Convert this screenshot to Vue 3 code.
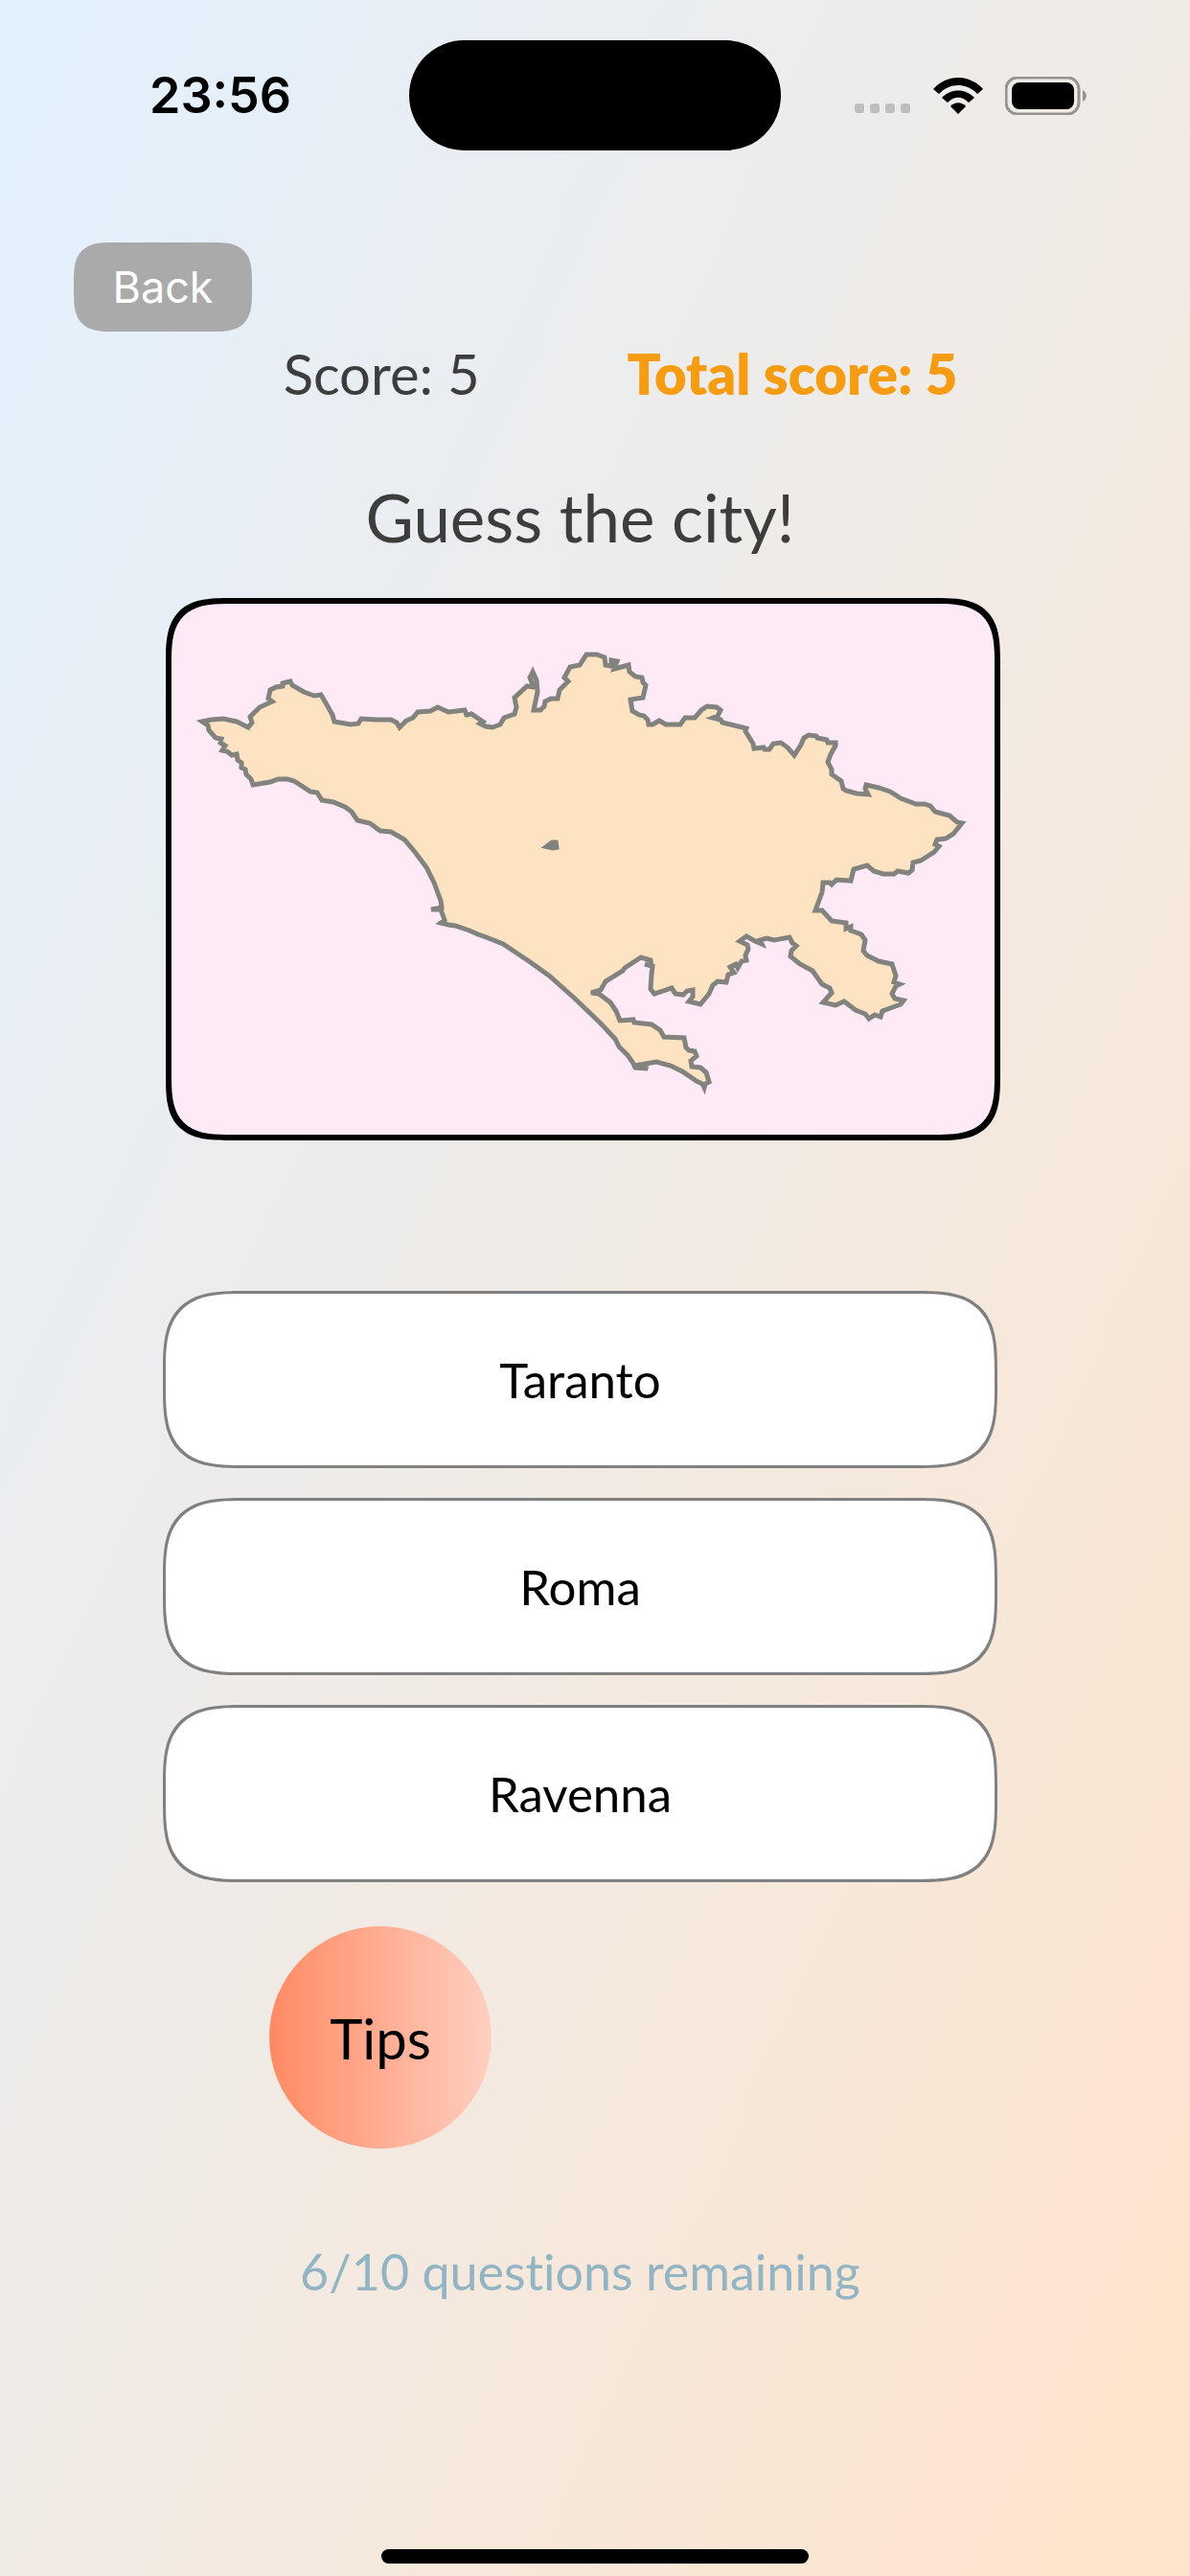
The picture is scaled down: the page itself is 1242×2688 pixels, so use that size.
<template>
  <div class="screen">
    <header class="status-bar">
      <time class="status-time">23:56</time>
      <div class="island"></div>
      <div class="status-icons">
        <svg class="signal" viewBox="0 0 60 40" aria-hidden="true">
          <rect v-for="n in 4" :key="n" :x="(n - 1) * 16 + 1" y="28" width="10" height="10" rx="3" />
        </svg>
        <svg class="wifi" viewBox="0 0 54 40" aria-hidden="true">
          <path d="M1 13C15-3 39-3 53 13L47 18C36 6 18 6 7 18Z" />
          <path d="M10 22C19 12 35 12 44 22L38 27C31 20 23 20 16 27Z" />
          <path d="M19 31C23 26 31 26 35 31L27 39Z" />
        </svg>
        <svg class="battery" viewBox="0 0 86 40" aria-hidden="true">
          <rect class="battery-shell" x="1" y="1" width="76" height="38" rx="12" />
          <rect x="7" y="6" width="65" height="28" rx="8" />
          <path class="battery-cap" d="M81 14C86 16 86 24 81 26Z" />
        </svg>
      </div>
    </header>

    <nav class="nav">
      <button class="back" type="button">Back</button>
    </nav>

    <main class="game">
      <div class="scores">
        <span class="score">Score: {{ score }}</span>
        <span class="total">Total score: {{ totalScore }}</span>
      </div>

      <h1 class="title">Guess the city!</h1>

      <div class="map">
        <svg viewBox="179 630 859 554" role="img" aria-label="City outline">
          <path class="region" :d="outline" />
          <path class="enclave" d="M568 884L576 878L581 878L582 885L577 886Z" />
        </svg>
      </div>

      <div class="answers">
        <button v-for="city in cities" :key="city" class="answer" type="button">{{ city }}</button>
      </div>

      <button class="tips" type="button">Tips</button>

      <p class="remaining">{{ remaining }}/10 questions remaining</p>
    </main>

    <div class="home-indicator"></div>
  </div>
</template>

<script setup>
import { ref } from 'vue'

const score = ref(5)
const totalScore = ref(5)
const remaining = ref(6)
const cities = ['Taranto', 'Roma', 'Ravenna']

const north =
  'M211 753L220 751L233 750L247 753L259 759L263 754L261 748L271 738L284 732L280 729L282 720L288 717L295 716L295 713L303 711L305 715L317 722L328 726L335 725L342 737L347 746L349 753L366 756L374 755L377 750L393 751L408 751L414 754L417 759L424 752L431 749L436 743L449 742L457 738L468 743L485 741L487 746L492 745L504 753L501 755L507 758L514 759L522 756L526 749L537 745L539 738L537 728L550 716L557 717L553 707L556 701L560 710L561 722L557 741L564 741L568 737L569 732L575 729L582 729L584 720L593 711L589 707L595 696L605 694L612 683L623 683L631 686L632 694L638 695L638 689L644 690L641 698L656 694L657 701L663 706L670 707L671 712L674 715L671 728L658 730L660 742L667 746L672 747L676 751L677 756L681 756L688 752L695 756L710 756L715 749L725 749L732 741L738 737L748 738L752 741L749 747L744 749L752 751L754 754L779 760L778 763L786 776L787 781L797 780L798 782L803 782L807 776L815 775L822 780L829 788L836 777L839 770L844 767L852 768L853 770L863 772L864 775L872 775L872 778L867 787L864 795L868 803L868 808L878 815L880 823L883 825L894 828L906 829L903 823L904 819L917 822L929 826L940 833L956 839L965 839L971 841L976 847L991 851L999 858L1004 859'
const east =
  'L995 870L987 875L978 876L976 881L980 883L975 889L961 898L953 900L952 908L948 911L937 909L933 912L922 912L912 909L905 903L891 907L888 919L873 918L868 923L866 921L859 921L858 931L851 950L858 950L868 961L883 963L883 969L888 967L888 971L899 975L903 981L901 992L905 997L917 1003L931 1006L935 1018L933 1025L939 1027L935 1029L931 1037L934 1042L943 1044L940 1048L921 1055L919 1061L913 1059L907 1063L903 1058L893 1054L881 1045L872 1049L859 1046L868 1036L866 1031L858 1027L848 1013L835 1006L825 998L826 992L831 987L827 984L824 978L808 981L800 979L793 981L795 985L788 982L779 977L772 982L780 986L781 990L778 997L779 1002L774 1003L770 1010L768 1006L762 1009L766 1015L760 1017L758 1025L749 1024L744 1028L740 1037L731 1048L719 1045L723 1040L723 1033L717 1034L713 1038L705 1037L701 1031L683 1037L679 1032L680 1017L681 1008L673 1006L680 1008L679 1002L669 999L652 1010L650 1013L632 1024L627 1033L617 1036'
const south =
  'L625 1037L637 1046L643 1055L647 1065L661 1064L662 1067L680 1069L689 1075L693 1082L714 1083L716 1093L719 1096L725 1097L727 1102L721 1107L722 1113L731 1114L737 1119L740 1129L736 1131L735 1135L733 1131L727 1128L712 1118L700 1112L685 1108L668 1111L676 1115L663 1114L660 1108L655 1101L646 1092L642 1084L627 1068L600 1042L573 1018L552 1003L543 997L525 985L510 979L499 975L490 971L475 966L468 965L460 963L464 960L460 949L450 949L461 947L460 940L453 921L445 905L433 889L422 876L408 868L397 867L386 859L373 856L367 847L360 842L348 837L336 835L331 827L324 826L307 815L300 813L290 813L282 816L264 819L262 813L257 808L256 803L252 801L252 796L248 793L247 787L242 788L237 784L232 783L235 778L230 775L231 771L225 770L218 762L217 757Z'
const outline = north + east + south
</script>

<style>
body {
  margin: 0;
}
</style>

<style scoped>
.screen {
  box-sizing: border-box;
  min-height: 100vh;
  display: flex;
  flex-direction: column;
  background: linear-gradient(to bottom right, #e2f1ff, #ffe4cb);
  font-family: Lato, 'Noto Sans', sans-serif;
  font-variant-ligatures: none;
  color: #000000;
}

button {
  font: inherit;
  color: inherit;
  border: 0;
  padding: 0;
}

.status-bar {
  display: grid;
  grid-template-columns: 1fr 388px 1fr;
  align-items: center;
  padding-top: 42px;
}

.status-time {
  padding-left: 156px;
  font: 600 52px/60px Inter, sans-serif;
}

.island {
  height: 115px;
  border-radius: 58px;
  background: #000000;
}

.status-icons {
  display: flex;
  justify-content: flex-end;
  gap: 22px;
  padding-right: 107px;
}

.status-icons svg {
  height: 40px;
}

.signal {
  width: 60px;
  fill: #bfbebc;
}

.wifi {
  width: 54px;
}

.battery {
  width: 86px;
}

.battery-shell {
  fill: none;
  stroke: #96928f;
  stroke-width: 3;
}

.battery-cap {
  fill: #96928f;
}

.nav {
  padding: 96px 77px 0;
}

.back {
  display: block;
  width: 186px;
  height: 93px;
  border-radius: 32px;
  background: #aaaaaa;
  color: #ffffff;
  font: 400 45px/54px Inter, sans-serif;
}

.game {
  display: flex;
  flex-direction: column;
  padding: 0 201px 0 170px;
}

.scores {
  display: flex;
  justify-content: center;
  gap: 154px;
  padding-left: 84px;
  margin-top: 8px;
  font-size: 58px;
  line-height: 72px;
}

.score {
  color: #3d3d3d;
}

.total {
  color: #f59c13;
  font-weight: 800;
}

.title {
  margin: 70px 0 40px;
  color: #3d3d3d;
  font-size: 69px;
  font-weight: 400;
  line-height: 88px;
  text-align: center;
}

.map {
  border: 6px solid #000000;
  border-radius: 48px;
  margin-right: -3px;
  margin-left: 3px;
  background: #feeaf6;
  overflow: hidden;
}

.map svg {
  display: block;
  width: 100%;
}

.region {
  fill: #fee3c3;
  stroke: #82827f;
  stroke-width: 5;
}

.enclave {
  fill: #82827f;
  stroke: #82827f;
  stroke-width: 3;
}

.answers {
  display: flex;
  flex-direction: column;
  gap: 31px;
  margin-top: 157px;
}

.answer {
  height: 185px;
  border: 3px solid #808080;
  border-radius: 64px;
  background: #ffffff;
  font-size: 51px;
}

.tips {
  width: 232px;
  height: 232px;
  margin: 46px 0 0 111px;
  border-radius: 50%;
  background: linear-gradient(to right, #ff8a64, #ffcfc0);
  font-size: 58px;
}

.remaining {
  margin: 92px 0 0;
  color: #93b4c3;
  font-size: 52px;
  line-height: 72px;
  text-align: center;
}

.home-indicator {
  align-self: center;
  width: 446px;
  height: 15px;
  margin-top: auto;
  margin-bottom: 13px;
  border-radius: 8px;
  background: #000000;
}

@supports (corner-shape: squircle) {
  .map {
    border-radius: 68px;
    corner-shape: superellipse(1.6);
  }
  .answer {
    border-radius: 85px;
    corner-shape: superellipse(1.6);
  }
  .back {
    border-radius: 42px;
    corner-shape: superellipse(1.6);
  }
}
</style>
